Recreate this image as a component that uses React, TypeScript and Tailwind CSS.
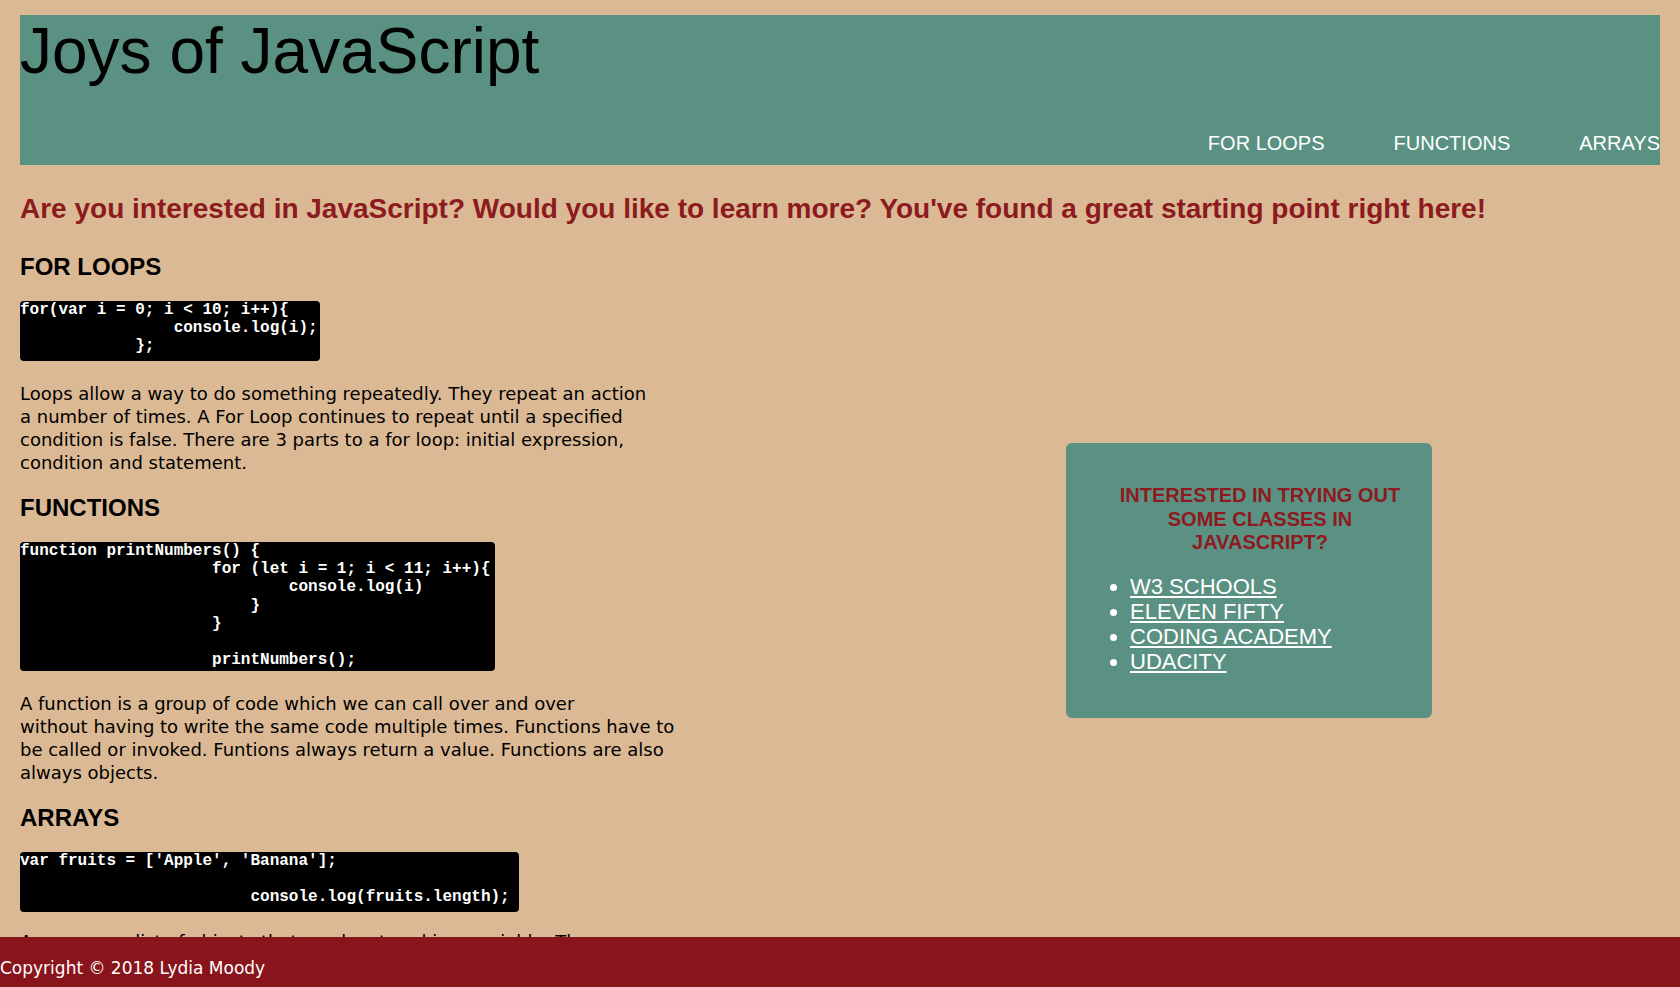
import React from 'react';

const bodyFont = "font-['DejaVu_Sans',Verdana,sans-serif]";
const headFont = "font-['Liberation_Sans',Arial,sans-serif]";
const monoFont = "font-['Liberation_Mono','Courier_New',monospace]";

const forLoop = `for(var i = 0; i < 10; i++){
                console.log(i);
            };`;

const fnCode = `function printNumbers() {
                    for (let i = 1; i < 11; i++){
                            console.log(i)
                        }
                    }

                    printNumbers();`;

const arrCode = `var fruits = ['Apple', 'Banana'];

                        console.log(fruits.length);`;

const links = ['W3 SCHOOLS', 'ELEVEN FIFTY', 'CODING ACADEMY', 'UDACITY'];

function Code({ code, className }: { code: string; className: string }) {
  return (
    <pre
      className={`${monoFont} mt-[21px] rounded bg-black text-[16px] leading-[18.2px] font-bold text-white whitespace-pre ${className}`}
    >
      {code}
    </pre>
  );
}

function Para({ lines, className = 'mt-[21px]' }: { lines: string[]; className?: string }) {
  return (
    <p className={`${bodyFont} ${className} text-[18px] leading-[23px] text-black whitespace-nowrap`}>
      {lines.map((l, i) => (
        <React.Fragment key={i}>
          {l}
          {i < lines.length - 1 && <br />}
        </React.Fragment>
      ))}
    </p>
  );
}

function Heading({ children, first }: { children: React.ReactNode; first?: boolean }) {
  return (
    <h3
      className={`${headFont} ${first ? 'mt-[28px]' : 'mt-[20px]'} text-[24px] leading-[27px] font-bold text-black`}
    >
      {children}
    </h3>
  );
}

export default function App() {
  return (
    <div className="min-h-screen bg-[#dbb994] pb-[60px]">
      <div className="px-5 pt-[15px]">
        <header className="flex h-[150px] flex-col justify-between bg-[#5a9182]">
          <h1 className={`${headFont} text-[64px] leading-[1.15] font-normal text-black`}>
            Joys of JavaScript
          </h1>
          <nav className={`${headFont} flex justify-end gap-[69px] pb-[10px] text-[20px] leading-[23px] text-white`}>
            <a href="#loops">FOR LOOPS</a>
            <a href="#functions">FUNCTIONS</a>
            <a href="#arrays">ARRAYS</a>
          </nav>
        </header>

        <h2 className={`${headFont} mt-[28px] text-[28px] leading-[32px] font-bold text-[#8c1a1e]`}>
          Are you interested in JavaScript? Would you like to learn more? You've found a great starting point right here!
        </h2>

        <div className="flex items-start">
          <main className="flex w-[680px] flex-col items-start">
            <Heading first>FOR LOOPS</Heading>
            <Code code={forLoop} className="h-[60px] w-[300px]" />
            <Para
              lines={[
                'Loops allow a way to do something repeatedly. They repeat an action',
                'a number of times. A For Loop continues to repeat until a specified',
                'condition is false. There are 3 parts to a for loop: initial expression,',
                'condition and statement.',
              ]}
            />

            <Heading>FUNCTIONS</Heading>
            <Code code={fnCode} className="h-[129px] w-[475px]" />
            <Para
              lines={[
                'A function is a group of code which we can call over and over',
                'without having to write the same code multiple times. Functions have to',
                'be called or invoked. Funtions always return a value. Functions are also',
                'always objects.',
              ]}
            />

            <Heading>ARRAYS</Heading>
            <Code code={arrCode} className="h-[60px] w-[499px]" />
            <Para
              className="mt-[18px]"
              lines={[
                'Arrays are a list of objects that can be stored in a variable. The',
                'length of an array can change and the values can be of any type.',
              ]}
            />
          </main>

          <aside className="ml-[366px] mt-[218px] w-[366px] rounded-md bg-[#5a9182] pt-[41px] pb-[44px]">
            <h4
              className={`${headFont} pl-[44px] pr-[22px] text-center text-[20px] leading-[23.5px] font-bold text-[#8c1a1e]`}
            >
              INTERESTED IN TRYING OUT SOME CLASSES IN JAVASCRIPT?
            </h4>
            <ul className={`${headFont} mt-[19px] list-disc pl-[64px] text-[22px] leading-[25px] text-white`}>
              {links.map((l) => (
                <li key={l}>
                  <a href="#" className="underline">
                    {l}
                  </a>
                </li>
              ))}
            </ul>
          </aside>
        </div>
      </div>

      <footer className="fixed bottom-0 left-0 h-[50px] w-full bg-[#8a141b] pt-[20px]">
        <p className={`${bodyFont} text-[17px] leading-[23px] text-white`}>Copyright © 2018 Lydia Moody</p>
      </footer>
    </div>
  );
}
